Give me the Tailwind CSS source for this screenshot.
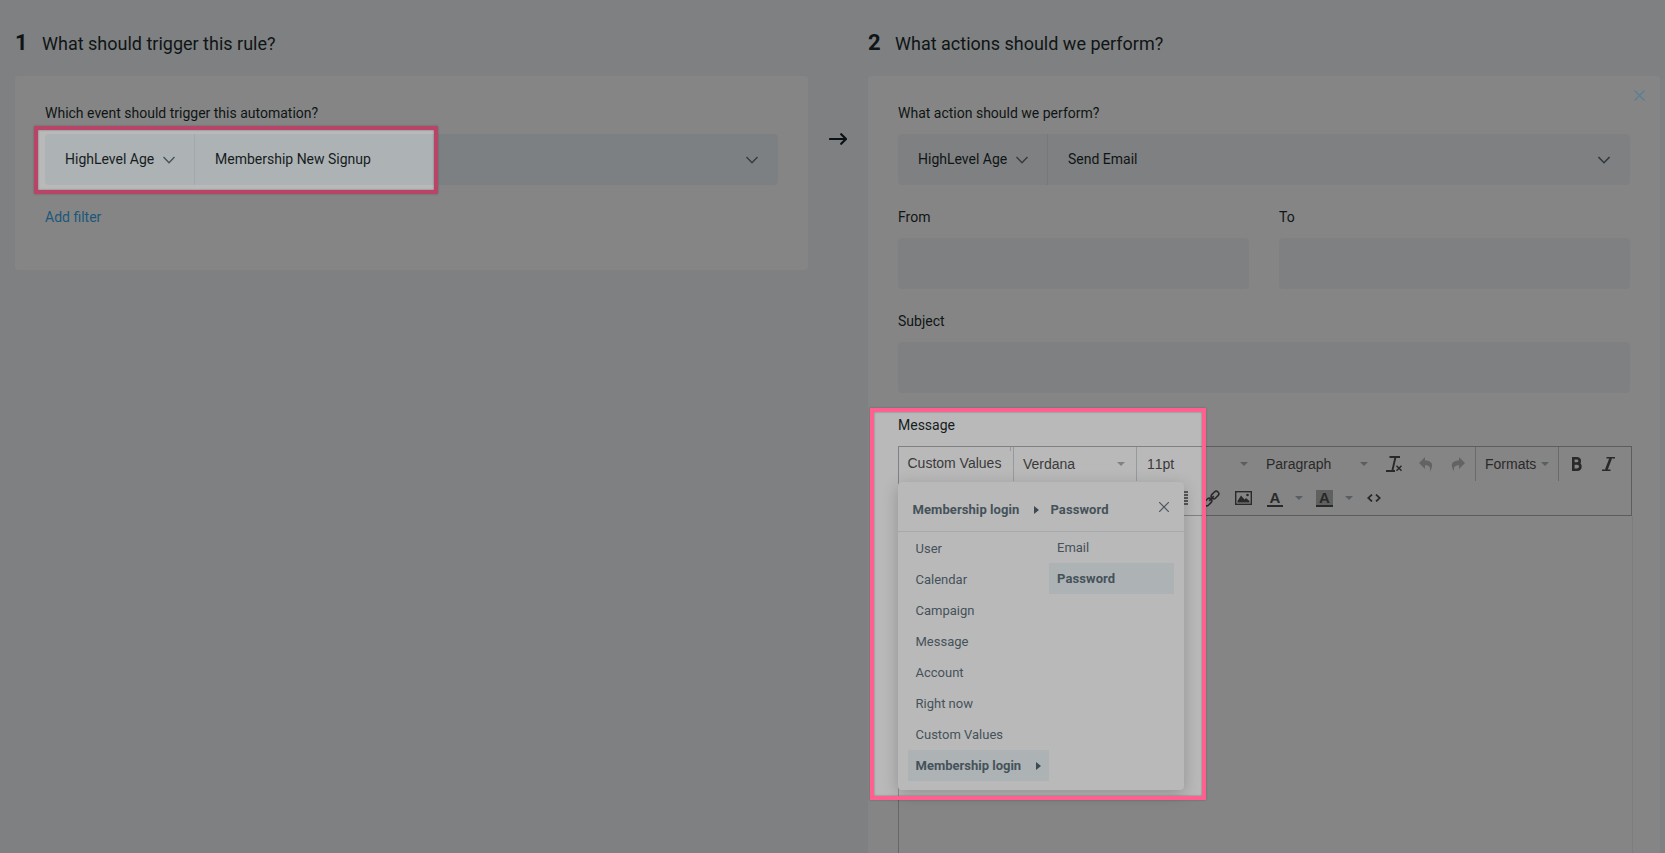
<!DOCTYPE html>
<html lang="en">
<head>
    <meta charset="UTF-8">
    <meta name="viewport" content="width=device-width, initial-scale=1.0">
    <title>Automation rule</title>
    <script src="https://cdn.jsdelivr.net/npm/@tailwindcss/browser@4"></script>
</head>
<body class="bg-[#afb2b4] font-['Roboto',sans-serif] text-[#161d21] text-sm overflow-hidden">
    <div class="relative w-[1665px] h-[853px] overflow-hidden">
        <div class="flex pl-[15px] h-full">
            <!-- trigger -->
            <section class="w-[793px]">
                <div class="flex items-baseline h-[76px] pt-[27px] leading-8">
                    <h2 class="w-[27px] text-[22px] font-bold">1</h2>
                    <h2 class="text-lg leading-8">What should trigger this rule?</h2>
                </div>
                <div class="bg-[#b9b9b9] rounded h-[194px] px-[30px] pt-[27px]">
                    <p class="h-5 leading-5">Which event should trigger this automation?</p>
                    <div class="flex items-center mt-[11px] h-[51px] bg-[#adb2b5] rounded">
                        <div class="flex items-center w-[150px] h-full pl-5 border-r border-[#a2a8ac]">
                            <span class="pb-0.5">HighLevel Age</span>
                            <svg class="ml-[9px] mt-px" width="12" height="8" viewBox="0 0 12 8" fill="none" stroke="#46525b" stroke-width="1.4"><path d="M.5 1 6 6.7 11.5 1"/></svg>
                        </div>
                        <span class="pl-5 pb-0.5">Membership New Signup</span>
                        <svg class="ml-auto mr-5 mt-px" width="12" height="8" viewBox="0 0 12 8" fill="none" stroke="#46525b" stroke-width="1.4"><path d="M.5 1 6 6.7 11.5 1"/></svg>
                    </div>
                    <a class="block mt-[22px] leading-5 text-[#2a79a8]">Add filter</a>
                </div>
            </section>

            <div class="w-[60px] pt-[133px] pl-[21px]">
                <svg width="18" height="12" viewBox="0 0 18 12" fill="none" stroke="#10181c" stroke-width="2.2" stroke-linecap="round" stroke-linejoin="round"><path d="M1 6h16M12.2 1.2 17 6l-4.8 4.8"/></svg>
            </div>

            <!-- actions -->
            <section class="w-[792px]">
                <div class="flex items-baseline h-[76px] pt-[27px] leading-8">
                    <h2 class="w-[27px] text-[22px] font-bold">2</h2>
                    <h2 class="text-lg leading-8">What actions should we perform?</h2>
                </div>
                <div class="relative bg-[#b9b9b9] rounded-t h-[777px] px-[30px] pt-[27px]">
                    <svg class="absolute right-[15px] top-[14px]" width="11" height="11" viewBox="0 0 11 11" stroke="#79b0cf" stroke-width="1.3"><path d="m.5.5 10 10m0-10-10 10"/></svg>
                    <p class="h-5 leading-5">What action should we perform?</p>
                    <div class="flex items-center mt-[11px] h-[51px] bg-[#afb2b4] rounded">
                        <div class="flex items-center w-[150px] h-full pl-5 border-r border-[#a2a8ac]">
                            <span class="pb-0.5">HighLevel Age</span>
                            <svg class="ml-[9px] mt-px" width="12" height="8" viewBox="0 0 12 8" fill="none" stroke="#46525b" stroke-width="1.4"><path d="M.5 1 6 6.7 11.5 1"/></svg>
                        </div>
                        <span class="pl-5 pb-0.5">Send Email</span>
                        <svg class="ml-auto mr-5 mt-px" width="12" height="8" viewBox="0 0 12 8" fill="none" stroke="#46525b" stroke-width="1.6"><path d="M.5 1 6 6.7 11.5 1"/></svg>
                    </div>
                    <div class="grid grid-cols-2 gap-[30px] mt-[22px]">
                        <div>
                            <p class="leading-5">From</p>
                            <div class="mt-[11px] h-[51px] bg-[#afb2b4] rounded"></div>
                        </div>
                        <div>
                            <p class="leading-5">To</p>
                            <div class="mt-[11px] h-[51px] bg-[#afb2b4] rounded"></div>
                        </div>
                    </div>
                    <p class="mt-[22px] leading-5">Subject</p>
                    <div class="mt-[11px] h-[51px] bg-[#afb2b4] rounded"></div>
                    <p class="mt-[22px] leading-5">Message</p>

                    <!-- editor -->
                    <div class="w-[735px] mt-[11px] font-['Liberation_Sans',Arial,sans-serif] text-[#393939]">
                        <div class="w-[734px] h-[70px] border border-[#7f8182]">
                            <div class="flex items-center h-[34px]">
                                <div class="relative w-[115px] h-full pl-[8.5px] leading-[33px] border-r border-[#979a9c]">
                                    Custom Values
                                    <span class="absolute right-[2px] top-0 w-px h-1 bg-[#979a9c]"></span>
                                </div>
                                <div class="flex items-center w-[123px] h-full pl-[9px] pr-[11px] justify-between border-r border-[#979a9c]">
                                    <span class="pb-px">Verdana</span>
                                    <svg width="8" height="4" viewBox="0 0 8 4" fill="#7c8389"><path d="M0 0h8L4 4z"/></svg>
                                </div>
                                <div class="flex items-center w-[111px] pl-[10px] justify-between">
                                    <span class="pb-px [font-kerning:none]">11pt</span>
                                    <svg width="8" height="4" viewBox="0 0 8 4" fill="#7c8389"><path d="M0 0h8L4 4z"/></svg>
                                </div>
                                <div class="flex items-center w-[120px] pl-[18px] justify-between">
                                    <span class="pb-px">Paragraph</span>
                                    <svg width="8" height="4" viewBox="0 0 8 4" fill="#7c8389"><path d="M0 0h8L4 4z"/></svg>
                                </div>
                                <svg class="ml-[18px]" width="17" height="16" viewBox="0 0 17 16" fill="none" stroke="#393939" stroke-width="1.9"><path d="M3.5 1H14M9.5 1 6.5 14M0 15h9"/><path d="m10.5 9.8 5 5m0-5-5 5" stroke-width="1.5"/></svg>
                                <svg class="ml-4" width="14" height="15" viewBox="0 0 14 15" fill="#8a8a8a"><path d="M6 0v3.500c5 0 8 2.500 7 6-.3 1.800-1 3.500-2.200 5.200.8-4 0-6.400-4.800-6.400V12L0 6z"/></svg>
                                <svg class="ml-[18px]" width="14" height="15" viewBox="0 0 14 15" fill="#8a8a8a"><path d="M8 0v3.500C3 3.500 0 6 1 9.500c.3 1.800 1 3.500 2.200 5.200-.8-4 0-6.400 4.800-6.400V12l6-6z"/></svg>
                                <div class="flex items-center w-[84px] h-full ml-[10px] pl-[9px] border-x border-[#929496]">
                                    <span class="pb-px">Formats</span>
                                    <svg class="ml-[5px]" width="8" height="4" viewBox="0 0 8 4" fill="#7c8389"><path d="M0 0h8L4 4z"/></svg>
                                </div>
                                <svg class="ml-3" width="11" height="14" viewBox="0 0 11 14" fill="none" stroke="#393939" stroke-width="2.6"><path d="M1 1.300H5.500c4.300 0 4.300 5.200 0 5.200H2h4c4.500 0 4.500 6.200 0 6.200H1M2.300 0v14"/></svg>
                                <svg class="ml-5" width="13" height="14" viewBox="0 0 13 14" fill="none" stroke="#393939"><path d="M4.500.7H13M0 13.300h8.500" stroke-width="1.400"/><path d="M8.800 1 4.200 13" stroke-width="2.600"/></svg>
                            </div>
                            <div class="flex items-center h-[34px] pl-[283px]">
                                <svg width="6" height="14" viewBox="0 0 6 14" stroke="#393939" stroke-width="1.7"><path d="M0 1h6M0 4h6M0 7h6M0 10h6M0 13h6"/></svg>
                                <svg class="ml-[15px]" width="17" height="17" viewBox="0 0 16 16" fill="none" stroke="#393939" stroke-width="1.5"><rect x="-4" y="-2.4" width="8" height="4.8" rx="2.4" transform="translate(11.3 4.700) rotate(-45)"/><rect x="-4" y="-2.4" width="8" height="4.8" rx="2.4" transform="translate(4.700 11.300) rotate(-45)"/><path d="m5.800 10.200 4.400-4.400"/></svg>
                                <svg class="ml-[15px]" width="17" height="14" viewBox="0 0 17 14"><rect x=".7" y=".7" width="15.600" height="12.600" fill="none" stroke="#393939" stroke-width="1.400"/><path d="M2.500 11.500V10L6 4.500 9.500 8.500 11 7l3.500 3v1.500z" fill="#393939"/><circle cx="12.500" cy="4" r="1.300" fill="#393939"/></svg>
                                <div class="flex justify-center w-4 h-[17px] ml-[15px] border-b-2 border-[#393939] text-[15px] leading-[15px] font-bold">A</div>
                                <svg class="ml-3" width="8" height="4" viewBox="0 0 8 4" fill="#7c8389"><path d="M0 0h8L4 4z"/></svg>
                                <div class="flex justify-center w-[17px] h-[17px] ml-[13px] border-b-2 border-[#393939] bg-[#858585] text-[15px] leading-[16px] font-bold">A</div>
                                <svg class="ml-3" width="8" height="4" viewBox="0 0 8 4" fill="#7c8389"><path d="M0 0h8L4 4z"/></svg>
                                <svg class="ml-[14px]" width="14" height="8" viewBox="0 0 14 8" fill="none" stroke="#393939" stroke-width="1.7"><path d="M5 .5 1.200 4 5 7.500M9 .5 12.800 4 9 7.500"/></svg>
                            </div>
                        </div>
                        <div class="h-[340px] border-l border-r border-l-[#8c8e8f] border-r-[#adadad]"></div>
                    </div>

                    <!-- custom values menu -->
                    <div class="absolute left-[30px] top-[406px] w-[286px] h-[308px] rounded bg-[#b9b9b9] text-[#45525a] text-[13px] shadow-[0_4px_16px_rgba(0,0,0,0.22)]">
                        <div class="flex items-center h-[50px] pt-2 pl-[14.5px] pr-[15px] border-b border-[#a6a8a9] font-bold">
                            <span class="tracking-[0.08px]">Membership login</span>
                            <svg class="ml-[15px] -mt-[2px]" width="5" height="8" viewBox="0 0 5 8" fill="#3c4a52"><path d="M0 0 5 4 0 8z"/></svg>
                            <span class="ml-[11px] tracking-[0.1px]">Password</span>
                            <svg class="ml-auto -mt-[7px]" width="10" height="10" viewBox="0 0 10 10" stroke="#4e585e" stroke-width="1.2"><path d="m0 0 10 10M10 0 0 10"/></svg>
                        </div>
                        <div class="flex pl-[10px] leading-[31px]">
                            <ul class="w-[141px] pt-px">
                                <li class="pl-[7.5px]">User</li>
                                <li class="pl-[7.5px]">Calendar</li>
                                <li class="pl-[7.5px]">Campaign</li>
                                <li class="pl-[7.5px]">Message</li>
                                <li class="pl-[7.5px]">Account</li>
                                <li class="pl-[7.5px]">Right now</li>
                                <li class="pl-[7.5px]">Custom Values</li>
                                <li class="flex items-center pl-[7.5px] pr-2 justify-between bg-[#adb2b5] font-bold">
                                    Membership login
                                    <svg width="5" height="8" viewBox="0 0 5 8" fill="#3c4a52"><path d="M0 0 5 4 0 8z"/></svg>
                                </li>
                            </ul>
                            <ul class="w-[125px]">
                                <li class="pl-2">Email</li>
                                <li class="pl-2 bg-[#adb2b5] font-bold tracking-[0.1px]">Password</li>
                            </ul>
                        </div>
                    </div>
                </div>
            </section>
        </div>

        <!-- dimmed backdrop with two lit areas -->
        <svg class="absolute inset-0" width="1665" height="853" viewBox="0 0 1665 853"><path fill="#000" fill-opacity=".28" fill-rule="evenodd" d="M0 0h1665v853H0zM36 128h400v64H36zM872 410h332v388H872z"/></svg>
        <div class="absolute left-[34px] top-[126px] w-[404px] h-[68px] border-4 border-[#b84468] shadow-[inset_0_0_2px_rgba(0,0,0,0.4),0_0_2px_rgba(0,0,0,0.25)]"></div>
        <div class="absolute left-[870px] top-[408px] w-[336px] h-[392px] border-4 border-[#ff6090] shadow-[inset_0_0_2px_rgba(0,0,0,0.4),0_0_2px_rgba(0,0,0,0.25)]"></div>
    </div>
</body>
</html>
